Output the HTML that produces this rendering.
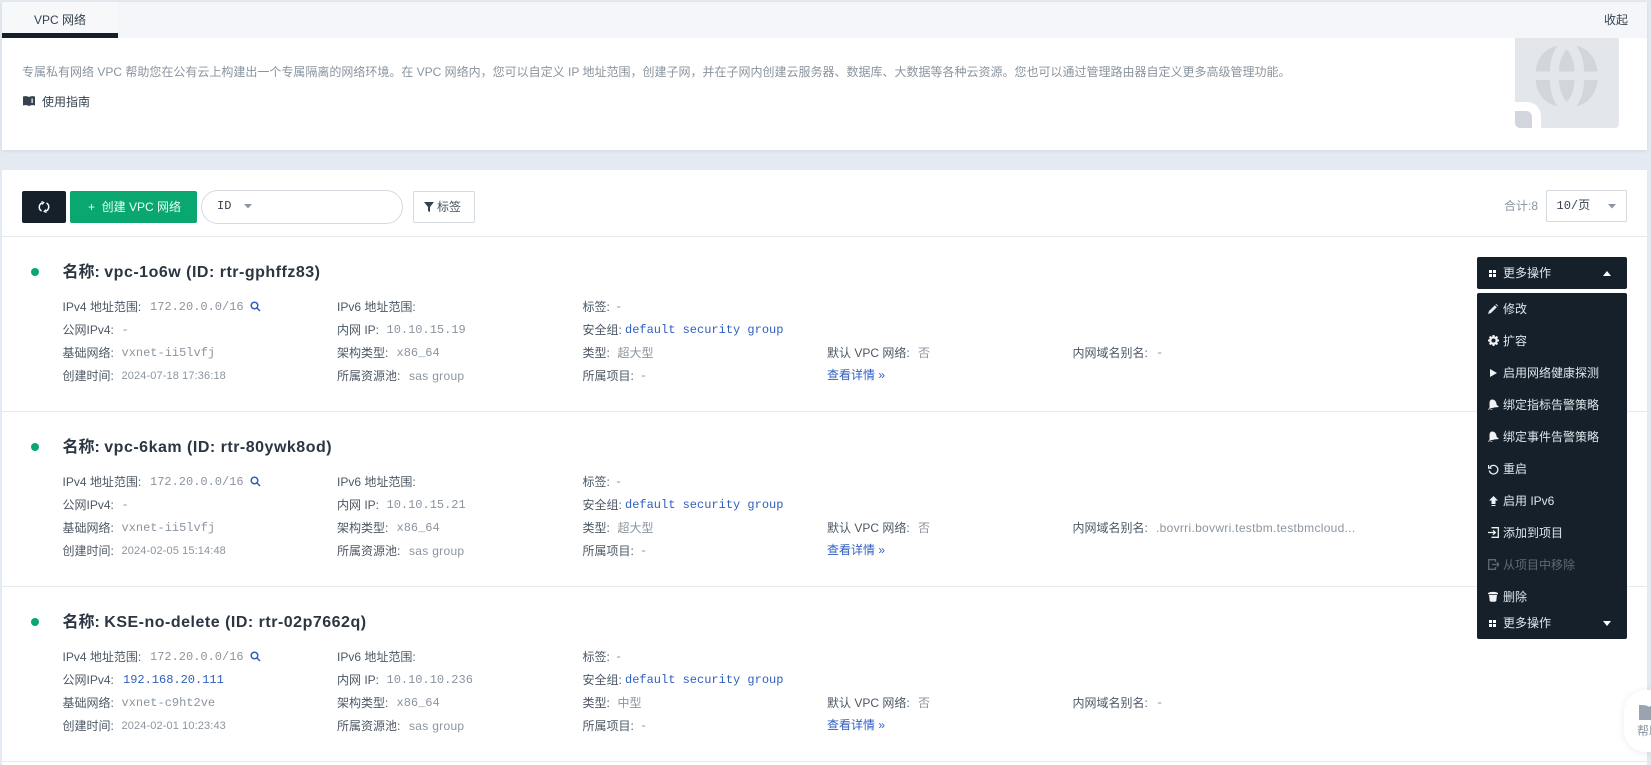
<!DOCTYPE html>
<html><head><meta charset="utf-8">
<style>
*{box-sizing:border-box}
html,body{margin:0;padding:0;width:1651px;height:765px;overflow:hidden;background:#e4eaf1}
body{font-family:"Liberation Sans","Noto Sans CJK SC",sans-serif;font-size:12px;color:#4d5864;position:relative}
.a{position:absolute}
.t{position:absolute;white-space:nowrap;line-height:16px}
.m{font-family:"Liberation Mono","Noto Sans CJK SC",monospace}
.v{color:#8b95a0}
.s{letter-spacing:.3px}
.d{font-size:11px;letter-spacing:.12px}
.b{color:#2f5fc0}
.l{letter-spacing:.5px}
.row{position:absolute;left:2px;width:1645px;height:175px;border-bottom:1px solid #e6eaef}
.row .t{margin-left:-2px}
.ti{font-size:16px;font-weight:700;color:#2b3642;line-height:20px;left:62.5px;top:26px}
.dot{position:absolute;left:29px;top:31px;width:8px;height:8px;border-radius:50%;background:#0aa870}
.y1{top:62px}.y2{top:85px}.y3{top:108px}.y4{top:131px}.y5{top:130px}
.mi{position:absolute;left:1503px;color:#dfe4ea;line-height:16px;white-space:nowrap}
svg{position:absolute;display:block}
</style></head><body>

<!-- header panel -->
<div class="a" style="left:2px;top:2px;width:1645px;height:148px;background:#fff;box-shadow:0 1px 3px rgba(50,70,90,.1)"></div>
<div class="a" style="left:2px;top:2px;width:1645px;height:36px;background:#f4f6fa"></div>
<div class="a" style="left:2px;top:2px;width:116px;height:36px;background:#f6f8fa;border-bottom:5px solid #15202b"></div>
<div class="t" style="left:34px;top:12px;color:#36424e">VPC 网络</div>
<div class="t" style="left:1604px;top:12px;color:#36424e">收起</div>
<div class="t v" style="left:22px;top:64px;color:#8a949e">专属私有网络 VPC 帮助您在公有云上构建出一个专属隔离的网络环境。在 VPC 网络内，您可以自定义 IP 地址范围，创建子网，并在子网内创建云服务器、数据库、大数据等各种云资源。您也可以通过管理路由器自定义更多高级管理功能。</div>
<svg style="left:23px;top:96px" width="12" height="10" viewBox="0 0 12 10"><path d="M0 .5C2 0 4 0 6 1 8 0 10 0 12 .5V9.500C10 9 8 9 6 10 4 9 2 9 0 9.500Z" fill="#36424e"/><rect x="8.500" y="2.500" width="1.200" height="4.500" fill="#fff"/></svg>
<div class="t" style="left:42px;top:94px;color:#36424e">使用指南</div>

<!-- globe illustration -->
<svg style="left:1514px;top:38px" width="106" height="91" viewBox="0 0 106 91">
<path d="M1 0H105V86a4 4 0 0 1-4 4H27V78a14 14 0 0 0-14-14H1Z" fill="#e3e7ec"/>
<path d="M1 73H12a6 6 0 0 1 6 6V90H6a5 5 0 0 1-5-5Z" fill="#d2d6dc"/>
<g fill="#d2d6dc">
<path d="M21.700 33.500C22.500 20 31 10 43.500 7.700 38.500 15 36 24 36 33.500Z"/>
<path d="M21.700 42C22.500 55.500 31 66 43.500 68.300 38.500 61 36 52 36 42Z"/>
<path d="M83.500 33.500C82.500 20 74 10 62.500 7.700 67.500 15 70 24 70 33.500Z"/>
<path d="M83.500 42C82.500 55.500 74 66 62.500 68.300 67.500 61 70 52 70 42Z"/>
<path d="M45 33.500C45 25 48 16 52.800 11.500 57.500 16 60.500 25 60.500 33.500Z"/>
<path d="M45 42C45 50 48 59.500 52.800 64 57.500 59.500 60.500 50 60.500 42Z"/>
</g></svg>

<!-- list panel -->
<div class="a" style="left:2px;top:170px;width:1645px;height:595px;background:#fff"></div>
<div class="a" style="left:2px;top:236px;width:1645px;height:1px;background:#e6eaef"></div>

<div class="a" style="left:22px;top:191px;width:44px;height:32px;background:#15202b;border-radius:2px"></div>
<svg style="left:38px;top:201px" width="12" height="12" viewBox="0 0 12 12" fill="none" stroke="#fff" stroke-width="1.500"><path d="M4.500 1.800A4.500 4.500 0 0 0 3.500 10"/><path d="M7.500 10.200A4.500 4.500 0 0 0 8.500 2"/><path d="M3.500 .5L6 1.500 4 3.500" stroke-width="1"/><path d="M8.500 11.500L6 10.500 8 8.500" stroke-width="1"/></svg>
<div class="a" style="left:70px;top:191px;width:127px;height:32px;background:#0aa870;border-radius:2px"></div>
<div class="t" style="left:88px;top:199px;color:#eafff6">+&nbsp; 创建 VPC 网络</div>
<div class="a" style="left:201px;top:190px;width:202px;height:34px;border:1px solid #d5dae0;border-radius:17px;background:#fff"></div>
<div class="t m" style="left:217px;top:198px;color:#36424e">ID</div>
<svg style="left:244px;top:204px" width="8" height="5"><path d="M0 0H8L4 4.500Z" fill="#8b95a0"/></svg>
<div class="a" style="left:413px;top:191px;width:62px;height:32px;border:1px solid #d5dae0;border-radius:2px;background:#fff"></div>
<svg style="left:424px;top:202px" width="10" height="10" viewBox="0 0 10 10"><path d="M0 0H10L6 5V10L4 9V5Z" fill="#36424e"/></svg>
<div class="t" style="left:437px;top:199px;color:#47535f">标签</div>

<div class="t v" style="left:1504px;top:198px">合计:8</div>
<div class="a" style="left:1546px;top:190px;width:81px;height:32px;border:1px solid #d5dae0;border-radius:2px;background:#fff"></div>
<div class="t m" style="left:1556.500px;top:198px;color:#36424e">10/页</div>
<svg style="left:1608px;top:204px" width="8" height="5"><path d="M0 0H8L4 4.500Z" fill="#8b95a0"/></svg>

<!-- row 1 -->
<div class="row" style="top:237px">
<div class="dot" style="left:29px"></div>
<div class="t ti">名称: <span class="l">vpc-1o6w (ID: rtr-gphffz83)</span></div>
<div class="t y1" style="left:62.500px">IPv4 地址范围:</div><div class="t y1 m v" style="left:150px">172.20.0.0/16</div>
<svg style="left:248px;top:64px" width="11" height="11" viewBox="0 0 11 11" fill="none" stroke="#2f5fc0" stroke-width="1.500"><circle cx="4.500" cy="4.500" r="3.300"/><path d="M7 7L10 10"/></svg>
<div class="t y2" style="left:62.500px">公网IPv4:</div><div class="t y2 m v" style="left:121.500px">-</div>
<div class="t y3" style="left:62.500px">基础网络:</div><div class="t y3 m v" style="left:121.500px">vxnet-ii5lvfj</div>
<div class="t y4" style="left:62.500px">创建时间:</div><div class="t y4 v d" style="left:121.500px">2024-07-18 17:36:18</div>
<div class="t y1" style="left:337px">IPv6 地址范围:</div>
<div class="t y2" style="left:337px">内网 IP:</div><div class="t y2 m v" style="left:386.500px">10.10.15.19</div>
<div class="t y3" style="left:337px">架构类型:</div><div class="t y3 m v" style="left:396.500px">x86_64</div>
<div class="t y4" style="left:337px">所属资源池:</div><div class="t y4 v s" style="left:409px">sas group</div>
<div class="t y1" style="left:582.500px">标签:</div><div class="t y1 m v" style="left:615px">-</div>
<div class="t y2" style="left:582.500px">安全组:</div><div class="t y2 m b" style="left:625px">default security group</div>
<div class="t y3" style="left:582.500px">类型:</div><div class="t y3 v" style="left:617.500px">超大型</div>
<div class="t y4" style="left:582.500px">所属项目:</div><div class="t y4 m v" style="left:640px">-</div>
<div class="t y3" style="left:827px">默认 VPC 网络:</div><div class="t y3 v" style="left:918px">否</div>
<div class="t y5 b" style="left:827px">查看详情 »</div>
<div class="t y3" style="left:1072.500px">内网域名别名:</div><div class="t y3 m v" style="left:1156px">-</div>
</div>

<!-- row 2 -->
<div class="row" style="top:412px">
<div class="dot"></div>
<div class="t ti">名称: <span class="l">vpc-6kam (ID: rtr-80ywk8od)</span></div>
<div class="t y1" style="left:62.500px">IPv4 地址范围:</div><div class="t y1 m v" style="left:150px">172.20.0.0/16</div>
<svg style="left:248px;top:64px" width="11" height="11" viewBox="0 0 11 11" fill="none" stroke="#2f5fc0" stroke-width="1.500"><circle cx="4.500" cy="4.500" r="3.300"/><path d="M7 7L10 10"/></svg>
<div class="t y2" style="left:62.500px">公网IPv4:</div><div class="t y2 m v" style="left:121.500px">-</div>
<div class="t y3" style="left:62.500px">基础网络:</div><div class="t y3 m v" style="left:121.500px">vxnet-ii5lvfj</div>
<div class="t y4" style="left:62.500px">创建时间:</div><div class="t y4 v d" style="left:121.500px">2024-02-05 15:14:48</div>
<div class="t y1" style="left:337px">IPv6 地址范围:</div>
<div class="t y2" style="left:337px">内网 IP:</div><div class="t y2 m v" style="left:386.500px">10.10.15.21</div>
<div class="t y3" style="left:337px">架构类型:</div><div class="t y3 m v" style="left:396.500px">x86_64</div>
<div class="t y4" style="left:337px">所属资源池:</div><div class="t y4 v s" style="left:409px">sas group</div>
<div class="t y1" style="left:582.500px">标签:</div><div class="t y1 m v" style="left:615px">-</div>
<div class="t y2" style="left:582.500px">安全组:</div><div class="t y2 m b" style="left:625px">default security group</div>
<div class="t y3" style="left:582.500px">类型:</div><div class="t y3 v" style="left:617.500px">超大型</div>
<div class="t y4" style="left:582.500px">所属项目:</div><div class="t y4 m v" style="left:640px">-</div>
<div class="t y3" style="left:827px">默认 VPC 网络:</div><div class="t y3 v" style="left:918px">否</div>
<div class="t y5 b" style="left:827px">查看详情 »</div>
<div class="t y3" style="left:1072.500px">内网域名别名:</div><div class="t y3 v s" style="left:1156px">.bovrri.bovwri.testbm.testbmcloud...</div>
</div>

<!-- row 3 -->
<div class="row" style="top:587px">
<div class="dot"></div>
<div class="t ti">名称: <span class="l">KSE-no-delete (ID: rtr-02p7662q)</span></div>
<div class="t y1" style="left:62.500px">IPv4 地址范围:</div><div class="t y1 m v" style="left:150px">172.20.0.0/16</div>
<svg style="left:248px;top:64px" width="11" height="11" viewBox="0 0 11 11" fill="none" stroke="#2f5fc0" stroke-width="1.500"><circle cx="4.500" cy="4.500" r="3.300"/><path d="M7 7L10 10"/></svg>
<div class="t y2" style="left:62.500px">公网IPv4:</div><div class="t y2 m b" style="left:123px">192.168.20.111</div>
<div class="t y3" style="left:62.500px">基础网络:</div><div class="t y3 m v" style="left:121.500px">vxnet-c9ht2ve</div>
<div class="t y4" style="left:62.500px">创建时间:</div><div class="t y4 v d" style="left:121.500px">2024-02-01 10:23:43</div>
<div class="t y1" style="left:337px">IPv6 地址范围:</div>
<div class="t y2" style="left:337px">内网 IP:</div><div class="t y2 m v" style="left:386.500px">10.10.10.236</div>
<div class="t y3" style="left:337px">架构类型:</div><div class="t y3 m v" style="left:396.500px">x86_64</div>
<div class="t y4" style="left:337px">所属资源池:</div><div class="t y4 v s" style="left:409px">sas group</div>
<div class="t y1" style="left:582.500px">标签:</div><div class="t y1 m v" style="left:615px">-</div>
<div class="t y2" style="left:582.500px">安全组:</div><div class="t y2 m b" style="left:625px">default security group</div>
<div class="t y3" style="left:582.500px">类型:</div><div class="t y3 v" style="left:617.500px">中型</div>
<div class="t y4" style="left:582.500px">所属项目:</div><div class="t y4 m v" style="left:640px">-</div>
<div class="t y3" style="left:827px">默认 VPC 网络:</div><div class="t y3 v" style="left:918px">否</div>
<div class="t y5 b" style="left:827px">查看详情 »</div>
<div class="t y3" style="left:1072.500px">内网域名别名:</div><div class="t y3 m v" style="left:1156px">-</div>
</div>

<!-- dropdown button -->
<div class="a" style="left:1477px;top:257px;width:150px;height:32px;background:#15202b;border-radius:2px"></div>
<svg style="left:1489px;top:270px" width="7" height="7"><g fill="#fff"><rect width="3" height="3"/><rect x="4" width="3" height="3"/><rect y="4" width="3" height="3"/><rect x="4" y="4" width="3" height="3"/></g></svg>
<div class="mi" style="top:265px">更多操作</div>
<svg style="left:1603px;top:271px" width="8" height="5"><path d="M0 5H8L4 0Z" fill="#fff"/></svg>

<!-- menu -->
<div class="a" style="left:1477px;top:293px;width:150px;height:346px;background:#15202b;border-radius:2px"></div>

<svg style="left:1488px;top:304px" width="10" height="10" viewBox="0 0 10 10"><path d="M0 10L1 7 6.800 1.200 8.800 3.200 3 9Z M7.500 .5 8.200 0 10 1.800 9.500 2.500Z" fill="#e6eaee"/></svg>
<div class="mi" style="top:301px">修改</div>

<svg style="left:1488px;top:335px" width="11" height="11" viewBox="0 0 11 11"><circle cx="5.500" cy="5.500" r="3.200" fill="none" stroke="#f0f2f4" stroke-width="2.300"/><g stroke="#f0f2f4" stroke-width="2"><path d="M5.500 0V2M5.500 9V11M0 5.500H2M9 5.500H11M1.600 1.600L3 3M8 8L9.400 9.400M1.600 9.400L3 8M8 3L9.400 1.600"/></g></svg>
<div class="mi" style="top:333px">扩容</div>

<svg style="left:1490px;top:369px" width="7" height="8"><path d="M0 0L7 4 0 8Z" fill="#f0f2f4"/></svg>
<div class="mi" style="top:365px">启用网络健康探测</div>

<svg style="left:1488px;top:399px" width="11" height="12" viewBox="0 0 11 12"><path d="M4 .5C7 .5 8.500 3 8.500 5.500L11 8 6 8.500C5 11 2 11.500 0 10.500L1.500 8.500 1.500 4C1.500 2 2.500.5 4 .5Z" fill="#f0f2f4"/><path d="M1 10.500C3 9.500 5 9.500 7 9" stroke="#15202b" fill="none"/></svg>
<div class="mi" style="top:397px">绑定指标告警策略</div>

<svg style="left:1488px;top:431px" width="11" height="12" viewBox="0 0 11 12"><path d="M4 .5C7 .5 8.500 3 8.500 5.500L11 8 6 8.500C5 11 2 11.500 0 10.500L1.500 8.500 1.500 4C1.500 2 2.500.5 4 .5Z" fill="#f0f2f4"/><path d="M1 10.500C3 9.500 5 9.500 7 9" stroke="#15202b" fill="none"/></svg>
<div class="mi" style="top:429px">绑定事件告警策略</div>

<svg style="left:1488px;top:464px" width="11" height="11" viewBox="0 0 11 11" fill="none" stroke="#f0f2f4" stroke-width="1.300"><path d="M1.800 3.500A4.300 4.300 0 1 1 1.300 6.500"/><path d="M.5 1V4.200H3.700" stroke-width="1.200"/></svg>
<div class="mi" style="top:461px">重启</div>

<svg style="left:1489px;top:496px" width="9" height="10" viewBox="0 0 9 10"><path d="M4.500 0L9 4.500H6.500V8H2.500V4.500H0Z M2.500 9H6.500V10H2.500Z" fill="#f0f2f4"/></svg>
<div class="mi" style="top:493px">启用 IPv6</div>

<svg style="left:1488px;top:527px" width="11" height="11" viewBox="0 0 11 11" fill="none" stroke="#f0f2f4" stroke-width="1.300"><path d="M3.500 .7H10.300V10.300H3.500"/><path d="M0 5.500H7M5 3.300L7.300 5.500 5 7.700"/></svg>
<div class="mi" style="top:525px">添加到项目</div>

<svg style="left:1488px;top:559px" width="11" height="11" viewBox="0 0 11 11" fill="none" stroke="#5f6873" stroke-width="1.300"><path d="M7.500 3V.7H.7V10.300H7.500V8"/><path d="M4 5.500H11M9 3.300L11 5.500 9 7.700"/></svg>
<div class="mi" style="top:557px;color:#5f6873">从项目中移除</div>

<svg style="left:1488px;top:591px" width="10" height="11" viewBox="0 0 10 11"><path d="M0 2.200C1.500 .5 8.500 .5 10 2.200V3.200H0Z M1 4H9L8.200 10.200C6.500 11 3.500 11 1.800 10.200Z" fill="#f0f2f4"/></svg>
<div class="mi" style="top:589px">删除</div>

<svg style="left:1489px;top:620px" width="7" height="7"><g fill="#fff"><rect width="3" height="3"/><rect x="4" width="3" height="3"/><rect y="4" width="3" height="3"/><rect x="4" y="4" width="3" height="3"/></g></svg>
<div class="mi" style="top:615px">更多操作</div>
<svg style="left:1603px;top:621px" width="8" height="5"><path d="M0 0H8L4 5Z" fill="#fff"/></svg>

<!-- help widget -->
<div class="a" style="left:1624px;top:690px;width:60px;height:62px;background:#fff;border-radius:22px;box-shadow:0 1px 8px rgba(50,70,90,.1);overflow:hidden">
<svg style="left:15px;top:15px" width="20" height="15"><path d="M0 0C4 0 8 0 10 2 12 0 16 0 20 0V15H0Z" fill="#9aa4b0"/></svg>
<div class="t" style="left:13px;top:33px;color:#8b95a0">帮助</div>
</div>

</body></html>
